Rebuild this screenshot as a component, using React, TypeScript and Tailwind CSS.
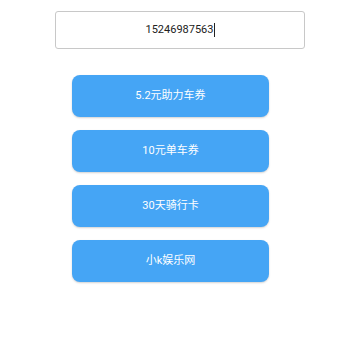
import React from "react";

export default function App() {
  const items = ["5.2元助力车券", "10元单车券", "30天骑行卡", "小k娱乐网"];
  return (
    <div
      className="w-[360px] h-[360px] bg-white flex flex-col"
      style={{ fontFamily: 'Roboto, "Noto Sans CJK SC", sans-serif' }}
    >
      <div className="pt-[11px] pl-[55px]">
        <div className="w-[250px] h-[38px] border border-[#c8c8c8] rounded-[3px] flex items-center justify-center text-[11px] text-[#222]">
          <span>15246987563</span>
          <span className="w-px h-[14px] bg-[#222]" />
        </div>
      </div>
      <div className="pl-[72px] pt-[26px] flex flex-col gap-[13px]">
        {items.map((t) => (
          <div
            key={t}
            className="w-[197px] h-[42px] rounded-[8px] bg-[#45a5f5] shadow-[0_1px_2px_rgba(0,0,0,0.18)] flex items-center justify-center text-white text-[11px]"
          >
            {t}
          </div>
        ))}
      </div>
    </div>
  );
}
